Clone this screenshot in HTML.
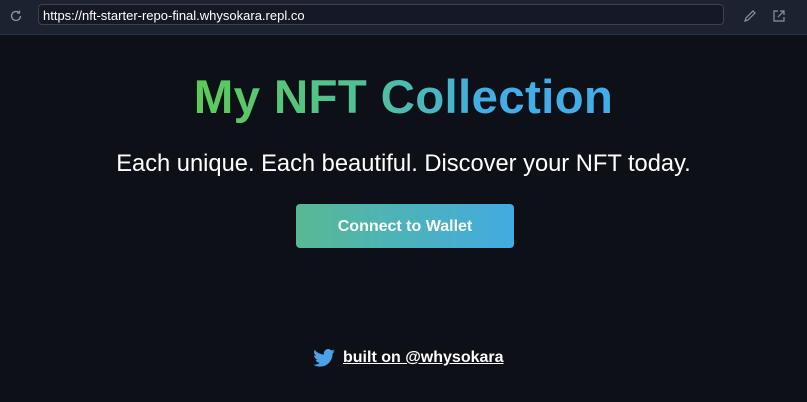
<!DOCTYPE html>
<html><head><style>
body{margin:0;width:807px;height:402px;background:#0d1017;font-family:"Liberation Sans",sans-serif;overflow:hidden;position:relative}
.bar{position:absolute;left:0;top:0;width:807px;height:34px;background:#1c2230;border-bottom:1px solid #2b3242}
.url{position:absolute;left:38px;top:4px;width:686px;height:21px;border:1px solid #3a4254;border-radius:4px;background:#141925;color:#fff;font-size:13px;line-height:21px;padding-left:4px;box-sizing:border-box}
h1{position:absolute;left:0;width:807px;top:70px;margin:0;text-align:center;font-size:47.5px;font-weight:bold;letter-spacing:0.3px}
h1 span{background:linear-gradient(90deg,#5ccb56 0%,#4fbfa0 45%,#42ade6 70%,#42ade6 100%);-webkit-background-clip:text;background-clip:text;color:transparent}
.sub{position:absolute;left:0;width:807px;top:151px;text-align:center;color:#fff;font-size:23.7px}
.btn{position:absolute;left:296px;top:204px;width:218px;height:44px;border-radius:4px;background:linear-gradient(90deg,#57b994,#42abe2);color:#fff;font-weight:bold;font-size:16px;text-align:center;line-height:46px}
.foot{position:absolute;left:313px;top:349px;color:#fff;font-weight:bold;font-size:16px;display:flex;align-items:center}
.foot a{color:#fff;text-decoration:underline;margin-left:8px}
</style></head><body>
<div class="bar">
<svg style="position:absolute;left:9px;top:9px" width="14" height="14" viewBox="0 0 14 14"><path d="M11.5 7a4.5 4.5 0 1 1-1.3-3.2M10.5 1.5v2.5H8" fill="none" stroke="#8a92a3" stroke-width="1.3"/></svg>
<div class="url">https://nft-starter-repo-final.whysokara.repl.co</div>
<svg style="position:absolute;left:743px;top:9px" width="14" height="14" viewBox="0 0 14 14"><path d="M2 12l1-3 7-7 2 2-7 7z" fill="none" stroke="#8a92a3" stroke-width="1.2"/></svg>
<svg style="position:absolute;left:772px;top:9px" width="14" height="14" viewBox="0 0 14 14"><path d="M6 2H2v10h10V8M8 2h4v4M12 2L6 8" fill="none" stroke="#8a92a3" stroke-width="1.2"/></svg>
</div>
<h1><span>My NFT Collection</span></h1>
<div class="sub">Each unique. Each beautiful. Discover your NFT today.</div>
<div class="btn">Connect to Wallet</div>
<div class="foot"><svg width="22" height="18" viewBox="0 0 24 20"><path fill="#4aa3ea" d="M24 2.4c-.9.4-1.8.6-2.8.8 1-.6 1.8-1.6 2.2-2.7-1 .6-2 1-3.1 1.2A4.9 4.9 0 0 0 11.9 6.2 14 14 0 0 1 1.7 1 4.9 4.9 0 0 0 3.2 7.6 4.9 4.9 0 0 1 1 7v.1a4.9 4.9 0 0 0 3.9 4.8 4.9 4.9 0 0 1-2.2.1 4.9 4.9 0 0 0 4.6 3.4A9.9 9.9 0 0 1 0 17.4 14 14 0 0 0 7.5 19.6c9.1 0 14-7.5 14-14v-.6c1-.7 1.8-1.6 2.5-2.6z"/></svg><a>built on @whysokara</a></div>
</body></html>
